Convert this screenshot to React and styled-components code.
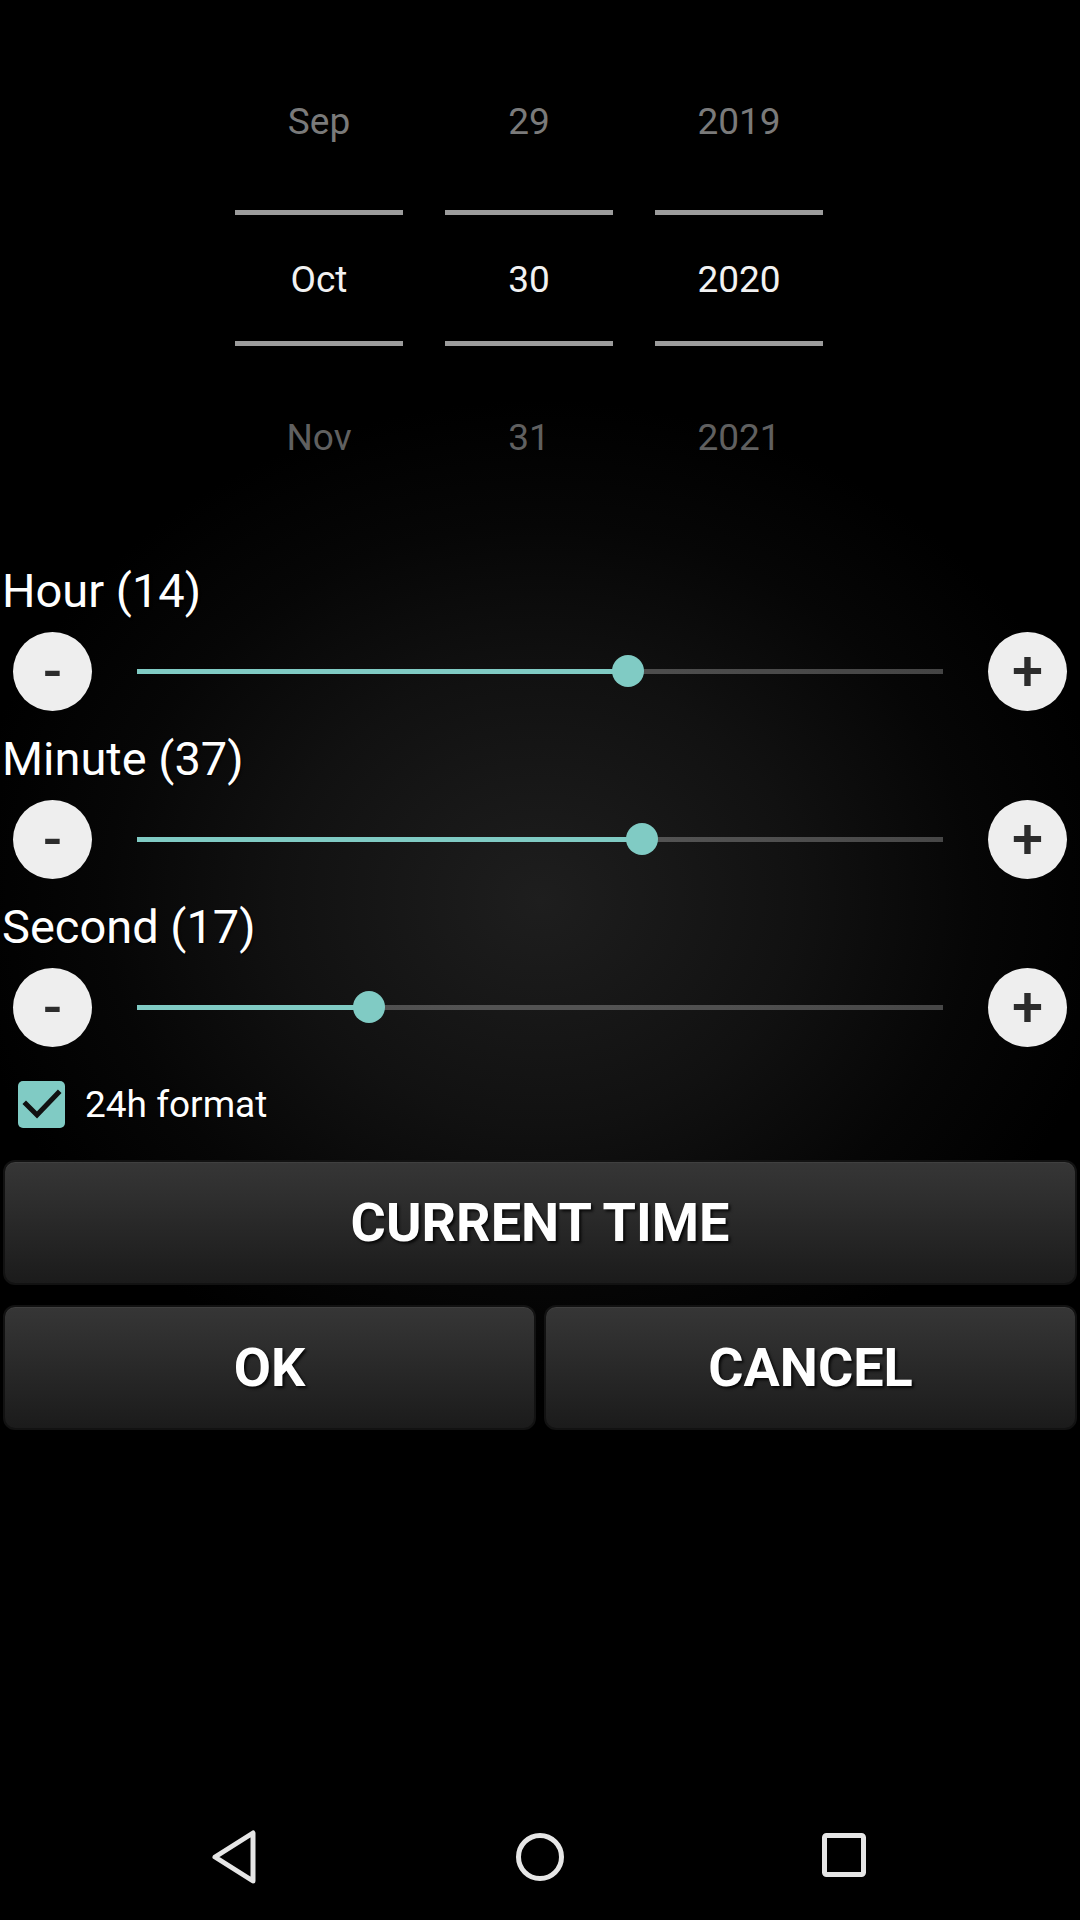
import React from "react";
import styled, { createGlobalStyle } from "styled-components";

const GlobalStyle = createGlobalStyle`
  html, body {
    margin: 0;
    padding: 0;
    background: #000;
  }
  * {
    box-sizing: border-box;
  }
`;

const TEAL = "#80cbc4";

const columns = [
  ["Sep", "Oct", "Nov"],
  ["29", "30", "31"],
  ["2019", "2020", "2021"],
];

const sliders = [
  { name: "Hour", value: 14, max: 23 },
  { name: "Minute", value: 37, max: 59 },
  { name: "Second", value: 17, max: 59 },
];

const App = () => {
  return (
    <>
      <GlobalStyle />
      <Screen>
        <Picker>
          {columns.map((col) => (
            <Column key={col[1]}>
              <PrevCell>{col[0]}</PrevCell>
              <Divider />
              <CurrentCell>{col[1]}</CurrentCell>
              <Divider />
              <NextCell>{col[2]}</NextCell>
            </Column>
          ))}
        </Picker>

        {sliders.map((s) => {
          const pct = (s.value / s.max) * 100;
          return (
            <SliderGroup key={s.name}>
              <Label>
                {s.name} ({s.value})
              </Label>
              <SliderRow>
                <RoundButton>-</RoundButton>
                <Track>
                  <Fill style={{ width: `${pct}%` }} />
                  <Thumb style={{ left: `${pct}%` }} />
                </Track>
                <RoundButton>+</RoundButton>
              </SliderRow>
            </SliderGroup>
          );
        })}

        <CheckRow>
          <CheckBox>
            <svg width="47" height="47" viewBox="0 0 47 47">
              <path
                d="M8 23 L19 34 L40 12"
                fill="none"
                stroke="#111"
                strokeWidth="5"
                strokeLinecap="square"
              />
            </svg>
          </CheckBox>
          <CheckLabel>24h format</CheckLabel>
        </CheckRow>

        <ButtonBar>
          <ActionButton>CURRENT TIME</ActionButton>
        </ButtonBar>
        <ButtonBar $top={20}>
          <ActionButton>OK</ActionButton>
          <ActionButton>CANCEL</ActionButton>
        </ButtonBar>

        <NavBar>
          <NavSlot>
            <svg width="48" height="56" viewBox="0 0 48 56">
              <path
                d="M42 4 L42 52 L4 28 Z"
                fill="none"
                stroke="#e6e6e6"
                strokeWidth="5"
                strokeLinejoin="round"
              />
            </svg>
          </NavSlot>
          <NavSlot>
            <svg width="56" height="56" viewBox="0 0 56 56">
              <circle cx="28" cy="28" r="21.5" fill="none" stroke="#e6e6e6" strokeWidth="5" />
            </svg>
          </NavSlot>
          <NavSlot>
            <svg width="48" height="56" viewBox="0 0 48 56">
              <rect
                x="3.5"
                y="6.5"
                width="39"
                height="39"
                rx="2"
                fill="none"
                stroke="#e6e6e6"
                strokeWidth="5"
              />
            </svg>
          </NavSlot>
        </NavBar>
      </Screen>
    </>
  );
};

const Screen = styled.div`
  width: 1080px;
  height: 1920px;
  display: flex;
  flex-direction: column;
  overflow: hidden;
  font-family: Roboto, "Noto Sans", sans-serif;
  color: #fff;
  background: radial-gradient(
    ellipse 580px 500px at 540px 900px,
    #1e1e1e 0%,
    #111 45%,
    #060606 75%,
    #000 100%
  );
`;

const Picker = styled.div`
  display: flex;
  gap: 42px;
  padding: 100px 0 105px 235px;
`;

const Column = styled.div`
  width: 168px;
  display: flex;
  flex-direction: column;
`;

const PrevCell = styled.div`
  height: 44px;
  line-height: 44px;
  margin-bottom: 66px;
  text-align: center;
  font-size: 37px;
  color: #7a7a7a;
`;

const CurrentCell = styled.div`
  height: 126px;
  padding-top: 4px;
  line-height: 122px;
  text-align: center;
  font-size: 37px;
  color: #f2f2f2;
`;

const NextCell = styled(PrevCell)`
  margin: 70px 0 0;
  color: #606060;
`;

const Divider = styled.div`
  height: 5px;
  background: #9c9c9c;
`;

const SliderGroup = styled.div`
  display: flex;
  flex-direction: column;
  margin-bottom: 8px;
`;

const Label = styled.div`
  height: 52px;
  line-height: 52px;
  padding-left: 2px;
  font-size: 47px;
  color: #fff;
  text-shadow: 1px 1px 2px rgba(0, 0, 0, 0.9);
`;

const SliderRow = styled.div`
  height: 108px;
  display: flex;
  align-items: center;
  gap: 45px;
  padding: 0 13px;
`;

const RoundButton = styled.div`
  width: 79px;
  height: 79px;
  flex: none;
  border-radius: 50%;
  background: #eeeeee;
  color: #2c2c2c;
  display: flex;
  align-items: center;
  justify-content: center;
  font-size: 56px;
  font-weight: 500;
  line-height: 1;
`;

const Track = styled.div`
  position: relative;
  flex: 1;
  height: 5px;
  background: rgba(255, 255, 255, 0.26);
`;

const Fill = styled.div`
  height: 100%;
  background: ${TEAL};
`;

const Thumb = styled.div`
  position: absolute;
  top: 50%;
  width: 32px;
  height: 32px;
  border-radius: 50%;
  background: ${TEAL};
  transform: translate(-50%, -50%);
`;

const CheckRow = styled.div`
  height: 82px;
  display: flex;
  align-items: center;
  gap: 20px;
  padding-left: 18px;
  margin-top: -6px;
  margin-bottom: 15px;
`;

const CheckBox = styled.div`
  width: 47px;
  height: 47px;
  border-radius: 5px;
  background: ${TEAL};
  display: flex;
`;

const CheckLabel = styled.span`
  font-size: 37px;
  color: #fff;
  text-shadow: 1px 1px 2px rgba(0, 0, 0, 0.9);
`;

const ButtonBar = styled.div`
  display: flex;
  gap: 8px;
  padding: 0 3px;
  margin-top: ${(p) => p.$top || 0}px;
`;

const ActionButton = styled.div`
  flex: 1;
  height: 125px;
  border-radius: 12px;
  border: 2px solid #121212;
  background: linear-gradient(#363636, #2a2a2a 45%, #1b1b1b);
  box-shadow: inset 0 1px 0 rgba(255, 255, 255, 0.05);
  display: flex;
  align-items: center;
  justify-content: center;
  font-size: 54px;
  font-weight: 700;
  color: #fff;
  text-shadow: 2px 2px 3px rgba(0, 0, 0, 0.85);
`;

const NavBar = styled.div`
  margin-top: auto;
  height: 126px;
  display: flex;
  align-items: center;
  padding: 0 83px 0 82px;
`;

const NavSlot = styled.div`
  flex: 1;
  display: flex;
  justify-content: center;
`;

export default App;
